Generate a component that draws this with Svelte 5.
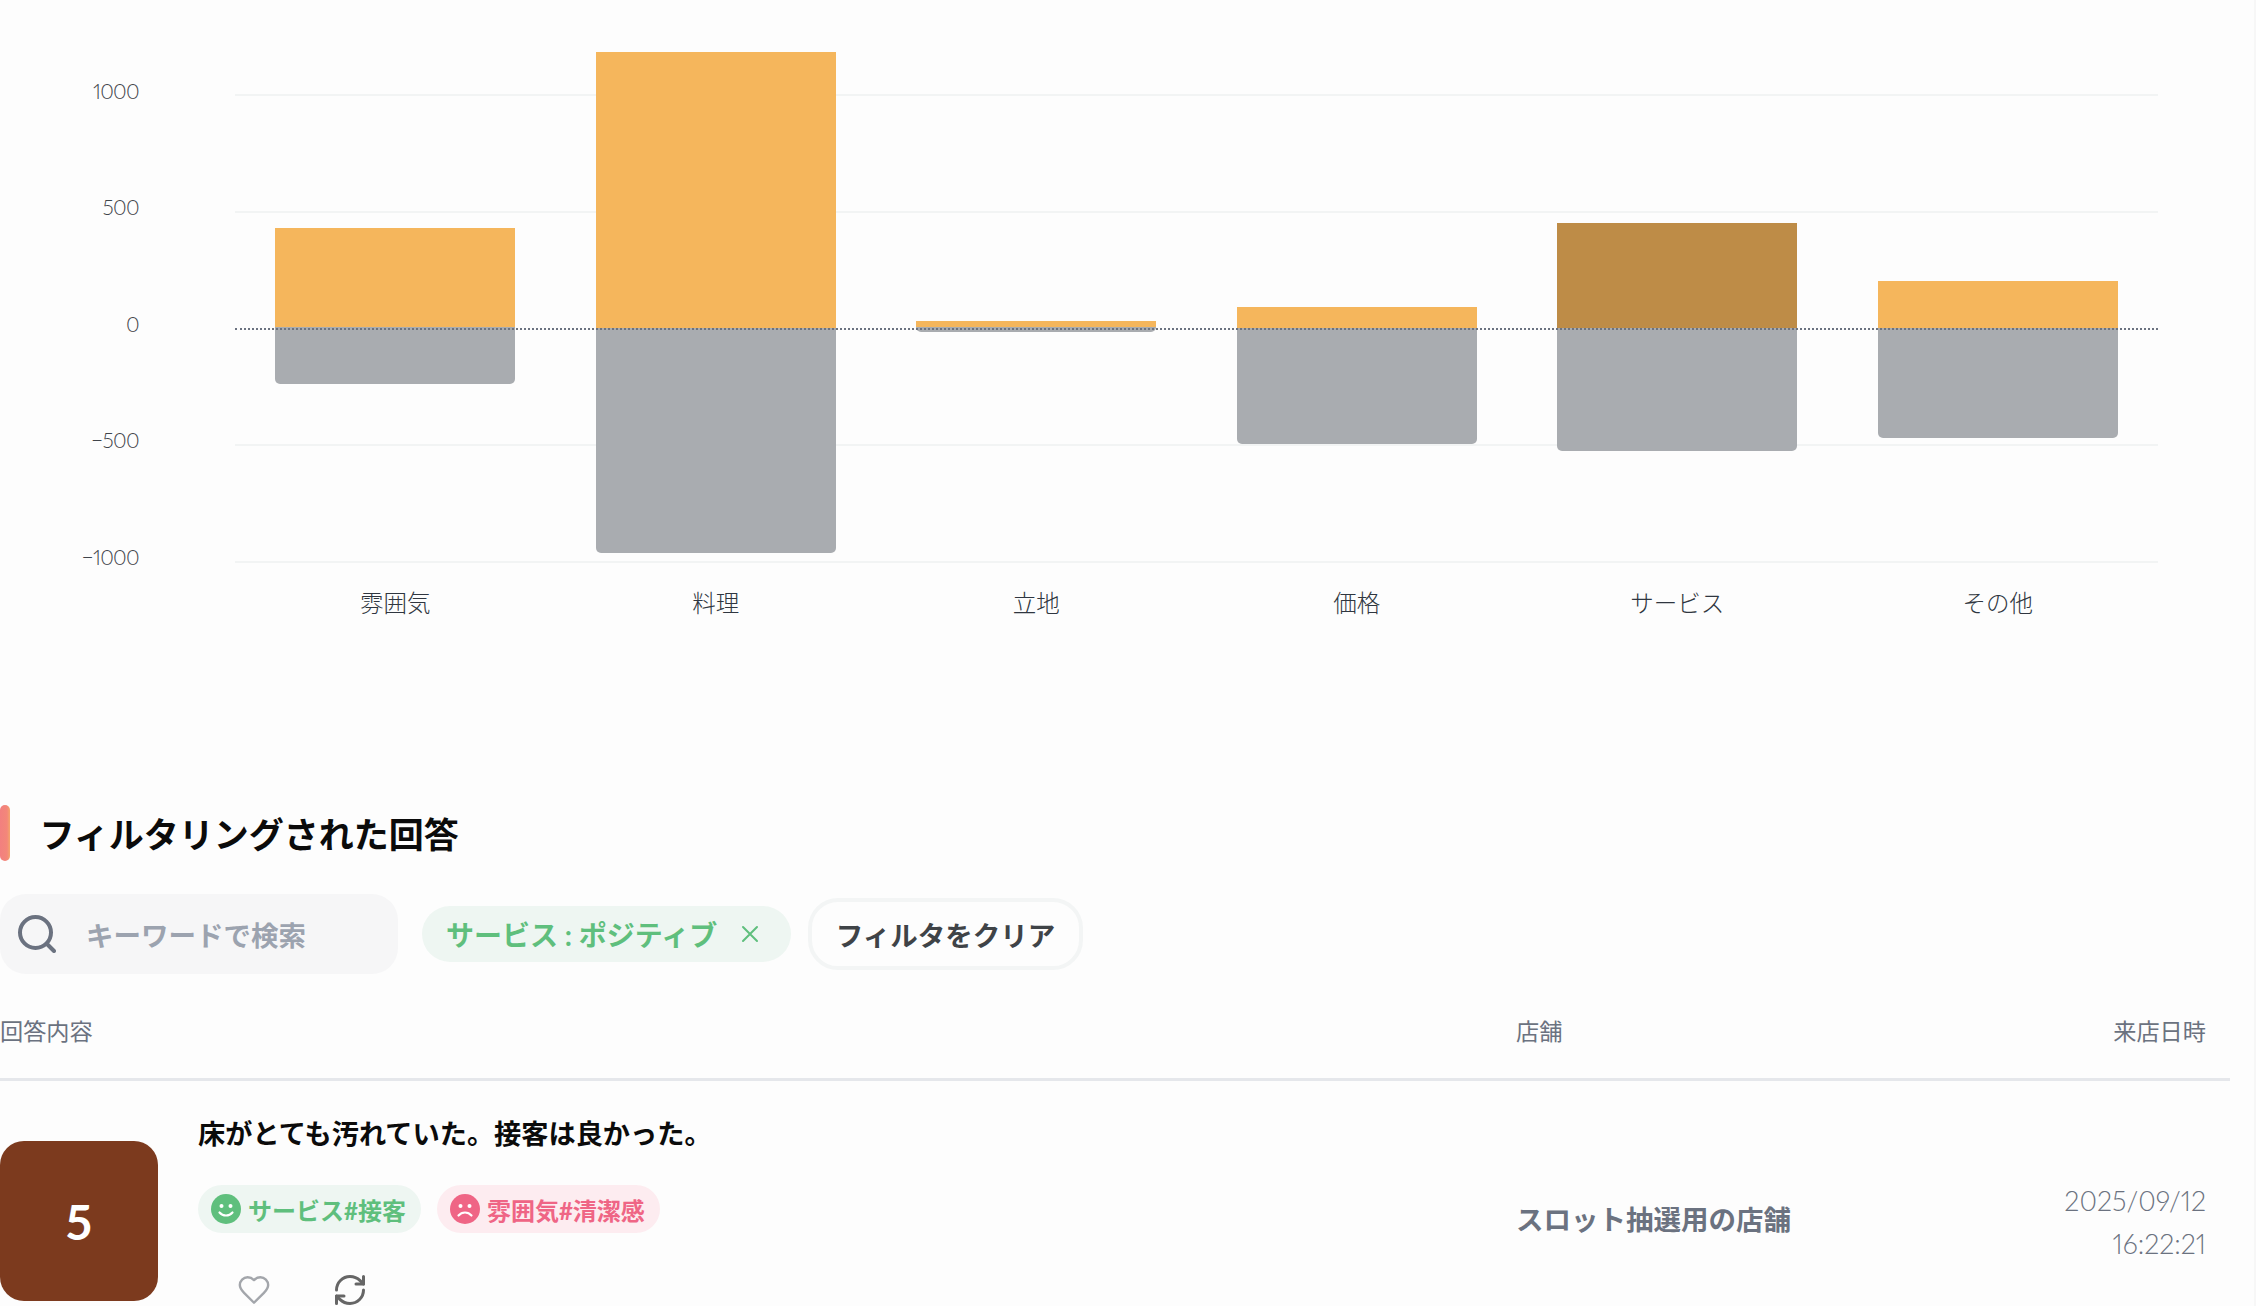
<script>
  const ticks = [1000, 500, 0, -500, -1000]
  const unit = 116.6 / 500
  const zero = 327.5
  const categories = [
    { name: '雰囲気', pos: 99.7, neg: 56.5 },
    { name: '料理', pos: 276, neg: 225.5 },
    { name: '立地', pos: 6.7, neg: 5 },
    { name: '価格', pos: 21, neg: 116.5 },
    { name: 'サービス', pos: 105, neg: 123, active: true },
    { name: 'その他', pos: 47, neg: 110 }
  ]
</script>

<main>
  <section class="chart">
    <div class="axis">
      {#each ticks as t}
        <span>{t < 0 ? '−' + -t : t}</span>
      {/each}
    </div>
    <div class="plot">
      <div class="grid">
        {#each ticks as t}
          <i class:zero={t === 0} style="top:{zero - t * unit}px"></i>
        {/each}
      </div>
      {#each categories as c}
        <div class="col">
          <div class="bar pos" class:active={c.active} style="margin-top:{zero - c.pos}px;height:{c.pos}px"></div>
          <div class="bar neg" style="height:{c.neg}px"></div>
        </div>
      {/each}
      <div class="zeroline" style="top:{zero}px"></div>
    </div>
    <div class="labels">
      {#each categories as c}
        <span>{c.name}</span>
      {/each}
    </div>
  </section>

  <h2><span class="mark"></span><span class="title">フィルタリングされた回答</span></h2>

  <div class="filters">
    <label class="search">
      <svg viewBox="0 0 38 38" width="38" height="38" fill="none" stroke="#6b7280" stroke-width="4" stroke-linecap="round">
        <circle cx="17.5" cy="17.5" r="15.5" />
        <path d="M29 29l7 7" />
      </svg>
      <span>キーワードで検索</span>
    </label>
    <div class="chip">
      <span>サービス : ポジティブ</span>
      <svg viewBox="0 0 18 18" width="18" height="18" fill="none" stroke="#5fbf7d" stroke-width="2" stroke-linecap="round">
        <path d="M2 2l14 14M16 2L2 16" />
      </svg>
    </div>
    <button>フィルタをクリア</button>
  </div>

  <div class="thead">
    <span>回答内容</span>
    <span>店舗</span>
    <span class="right">来店日時</span>
  </div>

  <div class="row">
    <div class="score">5</div>
    <div class="body">
      <p>床がとても汚れていた。接客は良かった。</p>
      <div class="tags">
        <span class="tag good">
          <svg viewBox="0 0 30 30" width="30" height="30">
            <circle cx="15" cy="15" r="15" fill="#5fbf7d" />
            <circle cx="10.500" cy="12" r="2" fill="#fff" />
            <circle cx="19.500" cy="12" r="2" fill="#fff" />
            <path d="M8.500 18.500c3.500 4 9.500 4 13 0" fill="none" stroke="#fff" stroke-width="2.200" stroke-linecap="round" />
          </svg>
          サービス#接客
        </span>
        <span class="tag bad">
          <svg viewBox="0 0 30 30" width="30" height="30">
            <circle cx="15" cy="15" r="15" fill="#ef6585" />
            <circle cx="10.500" cy="12" r="2" fill="#fff" />
            <circle cx="19.500" cy="12" r="2" fill="#fff" />
            <path d="M8.500 21.500c3.500 -4 9.500 -4 13 0" fill="none" stroke="#fff" stroke-width="2.200" stroke-linecap="round" />
          </svg>
          雰囲気#清潔感
        </span>
      </div>
      <div class="actions">
        <svg viewBox="0 0 24 24" width="34" height="34" fill="none" stroke="#a3a6ab" stroke-width="1.700" stroke-linejoin="round">
          <path d="M19 14c1.500-1.500 3-3.200 3-5.500A5.500 5.500 0 0 0 16.500 3c-1.800 0-3 .5-4.500 2-1.500-1.500-2.700-2-4.500-2A5.500 5.500 0 0 0 2 8.500c0 2.300 1.500 4 3 5.500l7 7Z" />
        </svg>
        <svg viewBox="0 0 24 24" width="36" height="36" fill="none" stroke="#666" stroke-width="2" stroke-linecap="round" stroke-linejoin="round">
          <path d="M3 12a9 9 0 0 1 9-9 9.750 9.750 0 0 1 6.740 2.740L21 8" />
          <path d="M21 3v5h-5" />
          <path d="M21 12a9 9 0 0 1-9 9 9.750 9.750 0 0 1-6.740-2.740L3 16" />
          <path d="M8 16H3v5" />
        </svg>
      </div>
    </div>
    <div class="store">スロット抽選用の店舗</div>
    <div class="date">2025/09/12<br />16:22:21</div>
  </div>
</main>

<style>
  :global(body) {
    background: #fdfdfd;
    overflow: hidden;
    font-family: Lato, "Noto Sans CJK JP", sans-serif;
  }
  main {
    box-sizing: border-box;
    height: 1306px;
    width: 2256px;
    overflow: hidden;
    border-right: 2px solid #f7f7f7;
  }
  .chart {
    display: grid;
    grid-template-columns: 139px 1923px;
    column-gap: 96px;
    height: 805px;
    align-content: start;
  }
  .axis {
    display: flex;
    flex-direction: column;
    align-items: flex-end;
    gap: 92.6px;
    padding-top: 78.6px;
    font-size: 21px;
    font-weight: 300;
    letter-spacing: -0.7px;
    font-variant-numeric: proportional-nums;
    color: #3f444b;
  }
  .axis span {
    height: 24px;
    line-height: 24px;
  }
  .plot {
    position: relative;
    display: grid;
    grid-template-columns: repeat(6, 1fr);
    height: 570px;
  }
  .grid {
    position: absolute;
    inset: 0;
  }
  .grid i {
    position: absolute;
    left: 0;
    right: 0;
    height: 2px;
    background: #f2f4f4;
  }
  .grid i.zero {
    display: none;
  }
  .zeroline {
    position: absolute;
    left: 0;
    right: 0;
    border-top: 2px dotted #6b7280;
  }
  .col {
    position: relative;
    display: flex;
    flex-direction: column;
    align-items: center;
  }
  .bar {
    width: 240px;
  }
  .pos {
    background: #f5b65c;
  }
  .pos.active {
    background: #be8c47;
  }
  .neg {
    background: #a9acb0;
    border-radius: 0 0 5px 5px;
  }
  .labels {
    grid-column: 2;
    display: grid;
    grid-template-columns: repeat(6, 1fr);
    text-align: center;
    font-size: 23.500px;
    font-weight: 300;
    line-height: 32px;
    color: #2f3640;
    margin-top: 17px;
  }
  h2 {
    display: flex;
    align-items: center;
    gap: 30px;
    margin: 0;
    height: 56px;
    font-size: 35px;
    font-weight: 700;
    color: #0b0b0b;
  }
  .title {
    margin-bottom: 2px;
  }
  .mark {
    width: 9.500px;
    height: 56px;
    border-radius: 5px;
    background: linear-gradient(90deg, #f2807f, #f3877a 70%, #f4a56c);
  }
  .filters {
    display: flex;
    align-items: center;
    margin-top: 33px;
  }
  .search {
    display: flex;
    align-items: center;
    gap: 30px;
    box-sizing: border-box;
    width: 398px;
    height: 80px;
    padding-left: 18px;
    border-radius: 26px;
    background: #f6f6f7;
    font-size: 27.500px;
    font-weight: 700;
    color: #9ca3af;
  }
  .chip {
    display: flex;
    align-items: center;
    justify-content: space-between;
    box-sizing: border-box;
    width: 369px;
    height: 56px;
    margin-left: 24px;
    padding: 0 32px 0 24px;
    border-radius: 28px;
    background: #eef6f2;
    font-size: 28px;
    font-weight: 700;
    color: #5fbf7d;
  }
  button {
    box-sizing: border-box;
    width: 275px;
    height: 72px;
    margin-left: 17px;
    padding: 0;
    border: 4px solid #f3f5f5;
    border-radius: 30px;
    background: #fdfdfd;
    font: inherit;
    font-size: 27.500px;
    font-weight: 700;
    color: #3f4347;
  }
  .thead {
    display: grid;
    grid-template-columns: 1516px 1fr auto;
    align-items: center;
    box-sizing: border-box;
    width: 2230px;
    height: 107px;
    padding: 8px 24px 0 0;
    border-bottom: 3px solid #e5e7eb;
    font-size: 23.200px;
    color: #6b7280;
  }
  .row {
    display: grid;
    grid-template-columns: 158px 1358px 1fr auto;
    width: 2230px;
    box-sizing: border-box;
    padding: 35px 24px 0 0;
    align-items: center;
  }
  .score {
    align-self: start;
    display: flex;
    align-items: center;
    justify-content: center;
    height: 160px;
    margin-top: 25px;
    border-radius: 24px;
    background: #7c3a1e;
    font-size: 48px;
    font-weight: 700;
    color: #fff;
  }
  .body {
    padding-left: 40px;
  }
  p {
    margin: 0;
    font-size: 27.200px;
    font-weight: 700;
    line-height: 36px;
    color: #0b0b0b;
  }
  .tags {
    display: flex;
    gap: 16px;
    margin-top: 33px;
  }
  .tag {
    display: flex;
    align-items: center;
    gap: 7px;
    height: 48px;
    padding: 0 15px 0 13px;
    border-radius: 24px;
    font-size: 24px;
    font-weight: 700;
  }
  .good {
    background: #eef6f2;
    color: #5fbf7d;
  }
  .bad {
    background: #fdecf0;
    color: #ef6585;
  }
  .actions {
    display: flex;
    align-items: center;
    gap: 61px;
    margin-top: 39px;
    padding-left: 39px;
  }
  .store {
    margin-top: 12px;
    font-size: 27.500px;
    font-weight: 700;
    color: #6b7280;
  }
  .date {
    margin-top: 19px;
    text-align: right;
    font-size: 27px;
    font-weight: 300;
    font-variant-numeric: proportional-nums;
    line-height: 43px;
    color: #6b7280;
  }
</style>
